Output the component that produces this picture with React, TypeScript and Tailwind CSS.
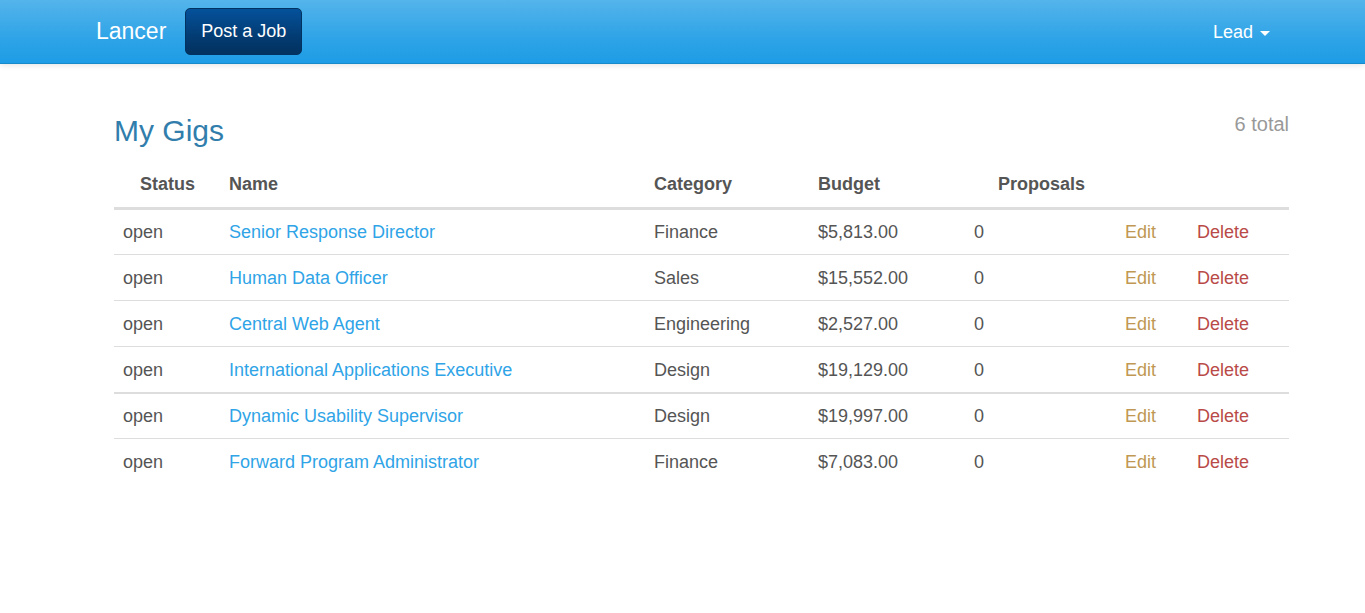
import React from 'react';

type Gig = {
  name: string;
  category: string;
  budget: string;
  proposals: number;
};

const gigs: Gig[] = [
  { name: 'Senior Response Director', category: 'Finance', budget: '$5,813.00', proposals: 0 },
  { name: 'Human Data Officer', category: 'Sales', budget: '$15,552.00', proposals: 0 },
  { name: 'Central Web Agent', category: 'Engineering', budget: '$2,527.00', proposals: 0 },
  { name: 'International Applications Executive', category: 'Design', budget: '$19,129.00', proposals: 0 },
  { name: 'Dynamic Usability Supervisor', category: 'Design', budget: '$19,997.00', proposals: 0 },
  { name: 'Forward Program Administrator', category: 'Finance', budget: '$7,083.00', proposals: 0 },
];

function Navbar() {
  return (
    <div className="h-[64px] bg-[linear-gradient(#54b4eb,#2fa4e7_60%,#1d9ce5)] border-b border-[#178acc] shadow-[0_1px_6px_rgba(0,0,0,0.12)]">
      <div className="flex items-center h-full pl-[96px] pr-[95px]">
        <a href="#" className="text-white text-[23px] leading-none">Lancer</a>
        <button className="ml-[19px] h-[47px] px-[15px] text-white text-[18px] rounded-[5px] border border-[#02325f] bg-[linear-gradient(#04519b,#033c73_60%,#02325f)]">
          Post a Job
        </button>
        <div className="ml-auto flex items-center text-white text-[18px] mt-[1px]">
          Lead
          <span className="ml-[7px] mt-[2px] w-0 h-0 border-l-[5px] border-r-[5px] border-t-[5px] border-l-transparent border-r-transparent border-t-white" />
        </div>
      </div>
    </div>
  );
}

function Row({ gig, border }: { gig: Gig; border: 'none' | 'thin' | 'thick' }) {
  const cls =
    border === 'thick'
      ? 'border-t-[2px] border-[#dddddd] [&>td]:pt-[2px]'
      : border === 'thin'
        ? 'border-t border-[#dddddd] [&>td]:pt-[2px]'
        : '';
  return (
    <tr className={cls}>
      <td className="px-[9px] h-[46px] text-[#555555]">open</td>
      <td className="px-[8px]">
        <a href="#" className="text-[#2fa4e7]">{gig.name}</a>
      </td>
      <td className="px-[8px] text-[#555555]">{gig.category}</td>
      <td className="px-[8px] text-[#555555]">{gig.budget}</td>
      <td className="px-[8px] text-[#555555]">{gig.proposals}</td>
      <td className="px-[8px]">
        <a href="#" className="text-[#c09853]">Edit</a>
      </td>
      <td className="px-[8px]">
        <a href="#" className="text-[#b94a48]">Delete</a>
      </td>
    </tr>
  );
}

export default function App() {
  return (
    <div className="min-h-screen bg-white font-['Liberation_Sans',Arial,sans-serif]">
      <Navbar />
      <div className="ml-[114px] w-[1175px]">
        <div className="flex items-start justify-between pt-[50px]">
          <h3 className="text-[30px] leading-[33px] text-[#317eac]">My Gigs</h3>
          <span className="text-[20px] leading-[25px] text-[#999999] -mt-[2px]">6 total</span>
        </div>
        <table className="w-full mt-[15px] text-[18px] leading-[25px] table-fixed border-collapse">
          <colgroup>
            <col className="w-[107px]" />
            <col className="w-[425px]" />
            <col className="w-[164px]" />
            <col className="w-[156px]" />
            <col className="w-[151px]" />
            <col className="w-[72px]" />
            <col />
          </colgroup>
          <thead>
            <tr className="border-b-[3px] border-[#dddddd] text-[#555555] font-bold">
              <th className="px-[8px] py-[10px] text-center">Status</th>
              <th className="px-[8px] py-[10px] text-left">Name</th>
              <th className="px-[8px] py-[10px] text-left">Category</th>
              <th className="px-[8px] py-[10px] text-left">Budget</th>
              <th className="px-[8px] py-[10px] text-center">Proposals</th>
              <th />
              <th />
            </tr>
          </thead>
          <tbody>
            {gigs.slice(0, 4).map((g, i) => (
              <Row key={g.name} gig={g} border={i === 0 ? 'none' : 'thin'} />
            ))}
          </tbody>
          <tbody>
            {gigs.slice(4).map((g, i) => (
              <Row key={g.name} gig={g} border={i === 0 ? 'thick' : 'thin'} />
            ))}
          </tbody>
        </table>
      </div>
    </div>
  );
}
